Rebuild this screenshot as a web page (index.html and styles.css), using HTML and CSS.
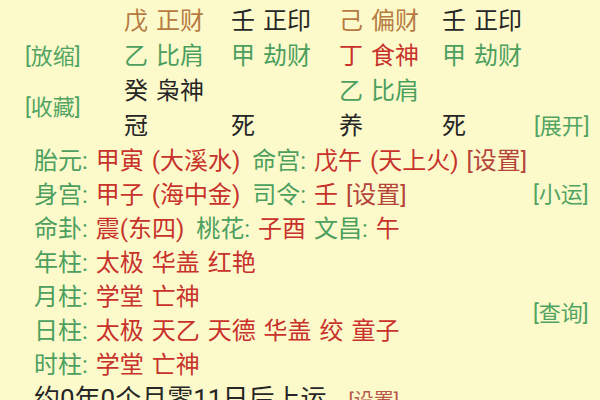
FILE: index.html
```
<!DOCTYPE html>
<html lang="zh-CN">
<head>
<meta charset="utf-8">
<title>排盘</title>
<link rel="stylesheet" href="styles.css">
</head>
<body>
<div class="page">
  <div class="top">
    <div class="side fangsuo">[放缩]</div>
    <div class="side shoucang">[收藏]</div>
    <div class="side zhankai">[展开]</div>

    <div class="cell c1 brown">戊 正财</div>
    <div class="cell c2 black">壬 正印</div>
    <div class="cell c3 brown">己 偏财</div>
    <div class="cell c4 black">壬 正印</div>

    <div class="cell c1 green">乙 比肩</div>
    <div class="cell c2 green">甲 劫财</div>
    <div class="cell c3 red">丁 食神</div>
    <div class="cell c4 green">甲 劫财</div>

    <div class="cell c1 black">癸 枭神</div>
    <div class="cell c2"></div>
    <div class="cell c3 green">乙 比肩</div>
    <div class="cell c4"></div>

    <div class="cell c1 black">冠</div>
    <div class="cell c2 black">死</div>
    <div class="cell c3 black">养</div>
    <div class="cell c4 black">死</div>
  </div>

  <div class="info">
    <div class="side xiaoyun">[小运]</div>
    <div class="side chaxun">[查询]</div>

    <div class="line"><span class="green">胎元:</span> <span class="red">甲寅 (大溪水)</span> <span class="green lbl">命宫:</span> <span class="red">戊午 (天上火)</span> <span class="set">[设置]</span></div>
    <div class="line"><span class="green">身宫:</span> <span class="red">甲子 (海中金)</span> <span class="green lbl">司令:</span> <span class="red">壬</span> <span class="set">[设置]</span></div>
    <div class="line"><span class="green">命卦:</span> <span class="red">震(东四)</span> <span class="green lbl">桃花:</span> <span class="red">子酉</span> <span class="green">文昌:</span> <span class="red">午</span></div>
    <div class="line"><span class="green">年柱:</span> <span class="red">太极 华盖 红艳</span></div>
    <div class="line"><span class="green">月柱:</span> <span class="red">学堂 亡神</span></div>
    <div class="line"><span class="green">日柱:</span> <span class="red">太极 天乙 天德 华盖 绞 童子</span></div>
    <div class="line"><span class="green">时柱:</span> <span class="red">学堂 亡神</span></div>
    <div class="line last"><span class="black">约0年0个月零11日后上运</span><span class="set small">[设置]</span></div>
  </div>
</div>
</body>
</html>
```
FILE: styles.css
```
html, body {
  margin: 0;
  padding: 0;
  background: #fcfacb;
}
body {
  width: 600px;
  height: 400px;
  overflow: hidden;
  font-family: Roboto, "Noto Sans CJK SC", sans-serif;
  font-size: 24px;
  word-spacing: 2px;
}
.page {
  padding-top: 4px;
}
.top {
  display: grid;
  grid-template-columns: 124px 107px 108px 103px 92px 1fr;
  grid-template-rows: repeat(4, 35px);
  line-height: 35px;
}
.cell { white-space: nowrap; }
.c1 { grid-column: 2; }
.c2 { grid-column: 3; }
.c3 { grid-column: 4; }
.c4 { grid-column: 5; }
.side {
  font-size: 22px;
  color: #52a462;
  white-space: nowrap;
}
.fangsuo {
  grid-column: 1;
  grid-row: 2;
  padding-left: 25px;
}
.shoucang {
  grid-column: 1;
  grid-row: 3 / span 2;
  align-self: center;
  padding-left: 25px;
  margin-bottom: 4px;
}
.zhankai {
  grid-column: 6;
  grid-row: 4;
}
.info {
  display: grid;
  grid-template-columns: 1fr 67px;
  grid-auto-rows: 34px;
  line-height: 34px;
  padding-left: 34px;
}
.line {
  grid-column: 1;
  white-space: nowrap;
}
.xiaoyun {
  grid-column: 2;
  grid-row: 2;
}
.chaxun {
  grid-column: 2;
  grid-row: 5 / span 2;
  align-self: center;
}
.lbl { margin-left: 4px; }
.green { color: #4c9f5e; }
.red { color: #c8322b; }
.brown { color: #b67a42; }
.black { color: #262626; }
.set { color: #b5443a; }
.last .black { font-size: 26px; }
.small {
  font-size: 20px;
  margin-left: 22px;
  color: #b8584a;
}
```
